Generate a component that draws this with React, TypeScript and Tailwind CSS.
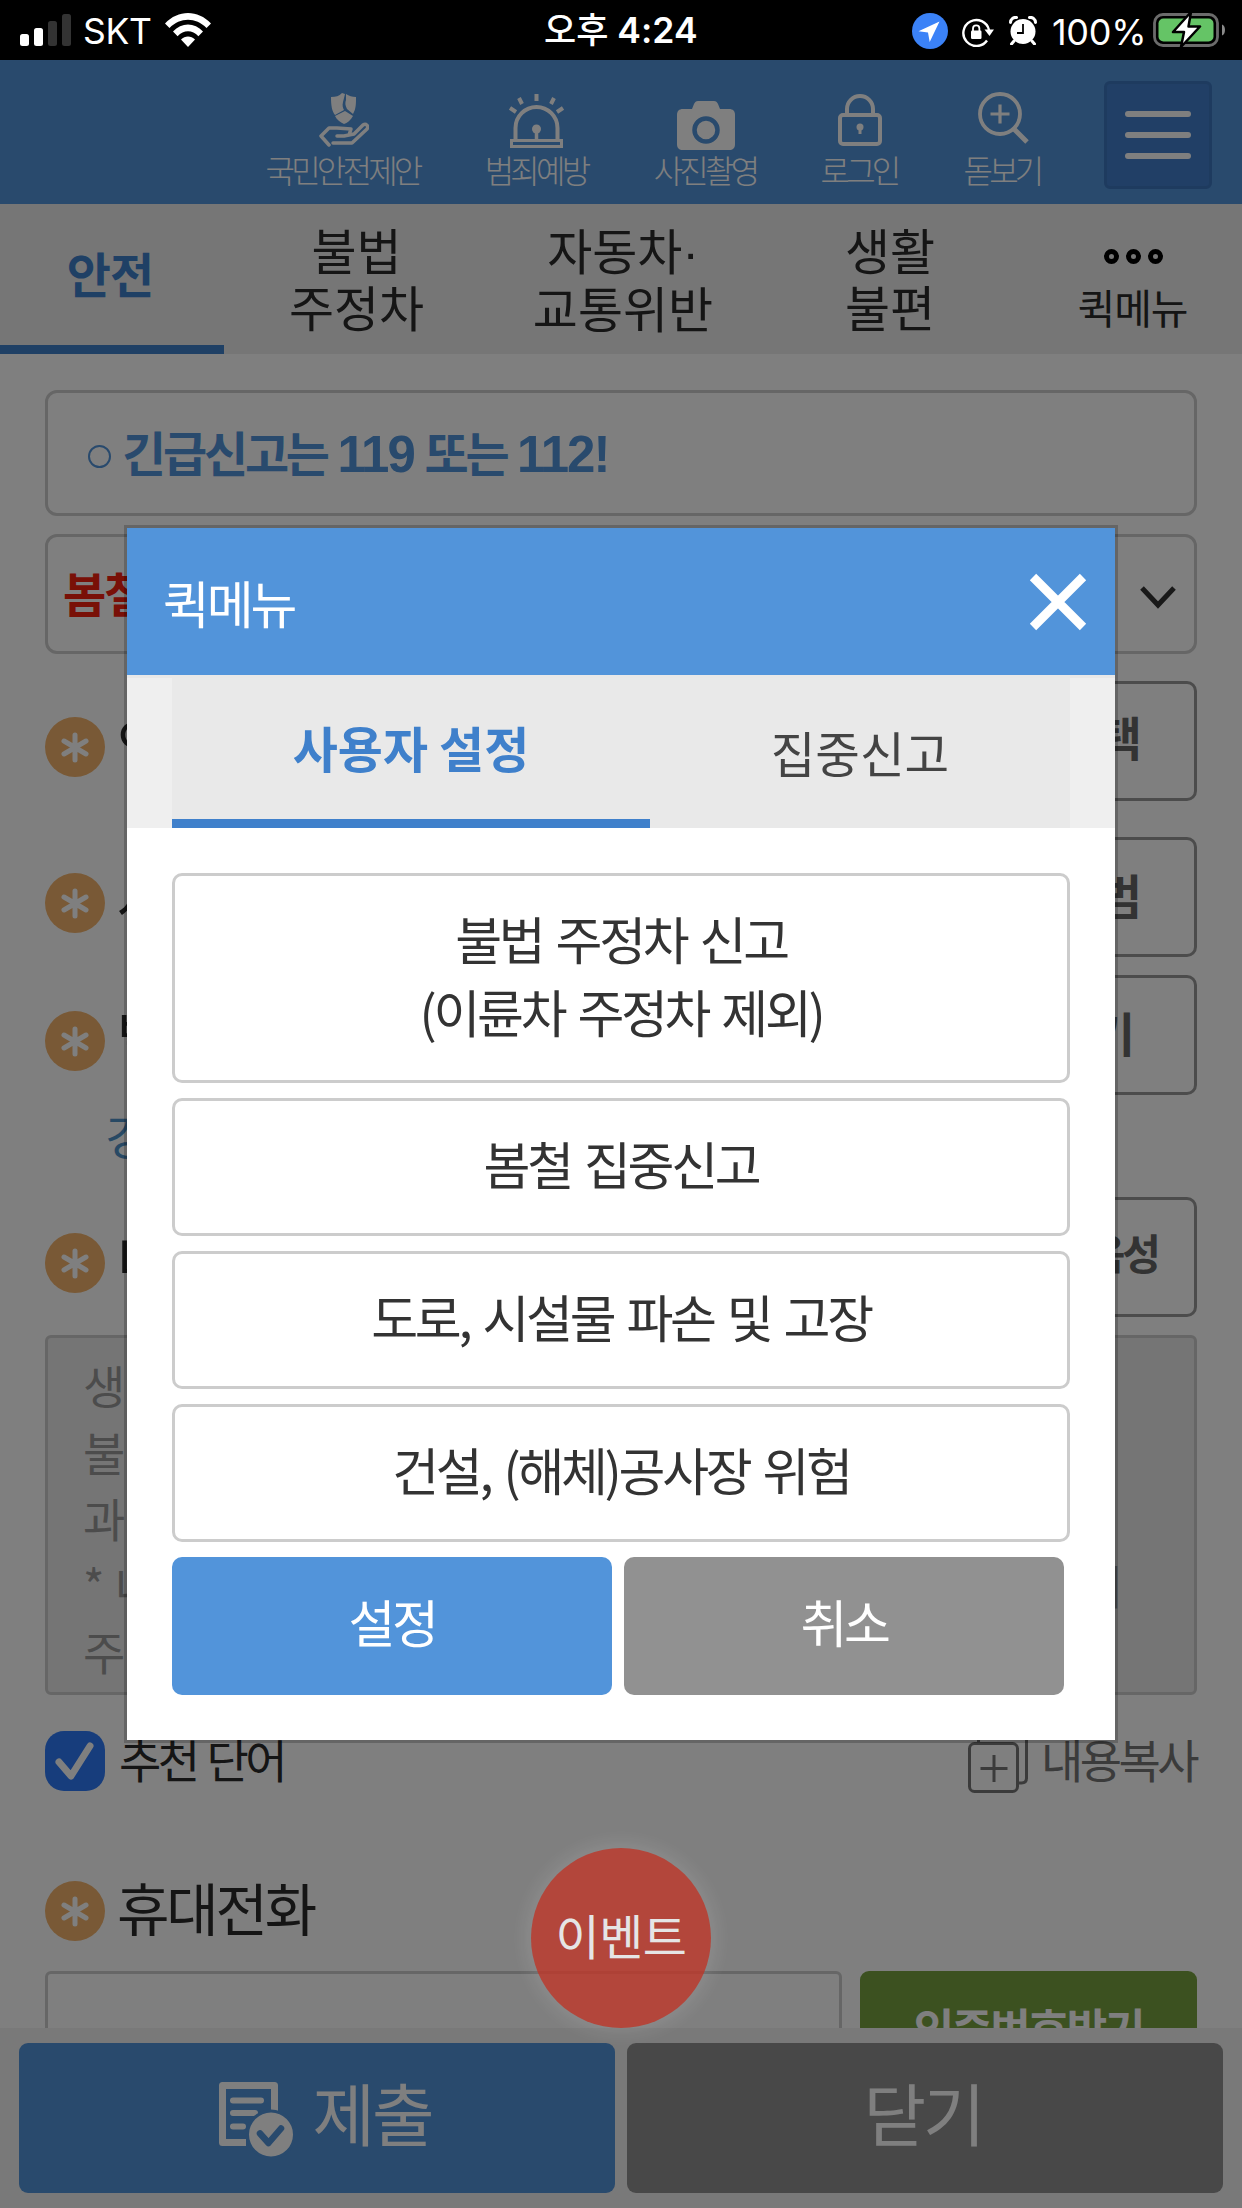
import type { ReactNode } from "react";

const QUICK_ITEMS = [
  ["불법 주정차 신고", "(이륜차 주정차 제외)"],
  ["봄철 집중신고"],
  ["도로, 시설물 파손 및 고장"],
  ["건설, (해체)공사장 위험"],
];

const PLACEHOLDER = [
  ["생활 속 안전 위험요인", ""],
  ["불편사항 등을 사진", ""],
  ["과 함께 신고해 주세요", ""],
  ["* 내용 입력 시", "기"],
  ["주소를 확인하세요", ""],
];

function StatusBar() {
  return (
    <div className="flex h-[60px] items-start bg-black text-white font-['Inter','Noto_Sans_CJK_KR',sans-serif]">
      <div className="flex w-[544px] items-start pl-5">
        <svg className="mt-3.5" width="51" height="32" viewBox="0 0 51 32">
          <rect x="0" y="20" width="9" height="12" rx="2.5" fill="#fff" />
          <rect x="14" y="14" width="9" height="18" rx="2.5" fill="#fff" />
          <rect x="28" y="7" width="9" height="25" rx="2.5" fill="#333" />
          <rect x="42" y="0" width="9" height="32" rx="2.5" fill="#333" />
        </svg>
        <span className="ml-3 mt-[11px] w-[68px] whitespace-nowrap text-[35.500px] leading-[42px] tracking-[-0.3px]">SKT</span>
        <svg className="ml-3.5 mt-[13px]" width="46" height="34" viewBox="0 0 46 34" fill="#fff">
          <path d="M0 10.5C13-3.5 33-3.5 46 10.5l-4.5 4.6C31 4 15 4 4.5 15.100z" />
          <path d="M8 18.500c8.500-9.200 21.500-9.200 30 0l-4.600 4.700c-6-6.600-14.800-6.600-20.800 0z" />
          <path d="M16 26.500c4-4 10-4 14 0L23 34z" />
        </svg>
      </div>
      <div className="mt-2.5 w-[368px] whitespace-nowrap text-[35.500px] font-semibold leading-[42px]">
        <span className="font-['Noto_Sans_CJK_KR',sans-serif] text-[35px] font-medium leading-none">오후</span> 4:24
      </div>
      <svg className="mt-[13px]" width="36" height="36" viewBox="0 0 36 36">
        <circle cx="18" cy="18" r="18" fill="#3b82f7" />
        <path d="M27.500 8.500L6.500 18.300l9.500 1.200 1.700 9.500z" fill="#fff" />
      </svg>
      <svg className="ml-3.5 mt-[17px]" width="32" height="30" viewBox="0 0 32 30">
        <path d="M25 23.500A13 13 0 1 1 27 13" fill="none" stroke="#fff" strokeWidth="2.400" />
        <path d="M22.500 12.500h9.500L27.500 19z" fill="#fff" />
        <rect x="9" y="13.500" width="10.500" height="8.500" rx="1.200" fill="#fff" />
        <path d="M11 14v-2.500a3.200 3.200 0 0 1 6.400 0V14" fill="none" stroke="#fff" strokeWidth="1.800" />
      </svg>
      <svg className="ml-[15px] mt-4" width="28" height="29" viewBox="0 0 28 29">
        <circle cx="14" cy="15.500" r="12.500" fill="#fff" />
        <path d="M1.500 6.500a5 5 0 0 1 6-5M26.500 6.500a5 5 0 0 0-6-5M5 25l-2.500 3M23 25l2.500 3" stroke="#fff" strokeWidth="3" strokeLinecap="round" fill="none" />
        <path d="M14 8v9H8" fill="none" stroke="#000" strokeWidth="1.800" />
      </svg>
      <span className="ml-[15px] mt-[11px] w-[94px] whitespace-nowrap text-[36px] leading-[42px] tracking-[-0.3px]">100%</span>
      <svg className="ml-[7px] mt-[11px]" width="75" height="38" viewBox="0 0 75 38">
        <rect x="1.500" y="3.500" width="63" height="31" rx="8.500" fill="none" stroke="#6b6b6b" strokeWidth="2.800" />
        <path d="M69 13.500c4 1.200 4 9.800 0 11z" fill="#8a8a8a" />
        <rect x="5.500" y="7.500" width="55" height="23" rx="5" fill="#65c466" />
        <path d="M38 1L20 21h11l-3 15 19-20.500H35.500z" fill="#fff" stroke="#000" strokeWidth="2.500" strokeLinejoin="round" />
      </svg>
    </div>
  );
}

function HeaderItem({ label, className, children }: { label: string; className: string; children: ReactNode }) {
  return (
    <div className={`flex shrink-0 flex-col items-center ${className}`}>
      <div className="flex h-[91px] items-end justify-center">{children}</div>
      <span className="-ml-0.5 whitespace-nowrap text-[32px] font-light leading-[36px] tracking-[-3.800px]">{label}</span>
    </div>
  );
}

function Header() {
  return (
    <header className="flex h-[144px] items-start bg-[#5294da] pl-[267px] text-white">
      <HeaderItem label="국민안전제안" className="w-[153px]">
        <svg className="mb-1" width="50" height="54" viewBox="0 0 50 54">
          <path d="M12 4c5 0 8-1 11-4l3 1-2 8c-1 4 0 6 1 8l-9 5c-3-4-4-9-4-18z" fill="#fff" />
          <path d="M27 1c3 2 6 3 10 3 0 7 0 12-3 17l-6-5c-2-4-2-6-1-9z" fill="#fff" />
          <path d="M16 23l10-5 8 5c-2 4-6 7-9 8-4-2-7-4-9-8z" fill="#fff" />
          <path d="M10 52L2 43l8-8h8l14 1-2 6-5 1h-7M30 42l5-1 9-9c3-2 6 1 4 4L33 50H14" fill="none" stroke="#fff" strokeWidth="3.500" strokeLinejoin="round" strokeLinecap="round" />
        </svg>
      </HeaderItem>
      <HeaderItem label="범죄예방" className="ml-[65px] w-[104px]">
        <svg className="mb-[3px]" width="56" height="54" viewBox="0 0 56 54" fill="none" stroke="#fff">
          <rect x="2.500" y="46.500" width="50" height="6" strokeWidth="3" />
          <path d="M6.500 46V34a21 21 0 0 1 42 0v12" strokeWidth="4" />
          <path d="M27.500 35v11" strokeWidth="3.500" />
          <ellipse cx="27.500" cy="35" rx="4.500" ry="4.500" fill="#fff" stroke="none" />
          <path d="M27.500 0v7M10 4l3 6M45 4l-3 6M1 14l6 4M54 14l-6 4" strokeWidth="4" />
        </svg>
      </HeaderItem>
      <HeaderItem label="사진촬영" className="ml-[65px] w-[104px]">
        <svg className="mb-px" width="58" height="49" viewBox="0 0 58 49">
          <path d="M6 8h9l2-5c1-2 2-3 4-3h16c2 0 3 1 4 3l2 5h9c4 0 6 2 6 6v29c0 4-2 6-6 6H6c-4 0-6-2-6-6V14c0-4 2-6 6-6z" fill="#fff" />
          <circle cx="29" cy="29" r="11.500" fill="none" stroke="#5294da" strokeWidth="4.500" />
        </svg>
      </HeaderItem>
      <HeaderItem label="로그인" className="ml-[63px] w-[78px]">
        <svg className="mb-[5px]" width="44" height="52" viewBox="0 0 44 52" fill="none" stroke="#fff" strokeWidth="4">
          <rect x="2" y="21" width="40" height="29" rx="3" />
          <path d="M9 20v-5a13 13 0 0 1 26 0v5" />
          <circle cx="22" cy="33" r="3.500" fill="#fff" stroke="none" />
          <path d="M22 33v7" strokeWidth="3" />
        </svg>
      </HeaderItem>
      <HeaderItem label="돋보기" className="ml-[65px] w-[78px]">
        <svg className="mb-[7px]" width="51" height="52" viewBox="0 0 51 52" fill="none" stroke="#fff" strokeWidth="3.800">
          <circle cx="22" cy="22" r="20" />
          <path d="M36 37l13 13" strokeWidth="5" />
          <path d="M22 12.500v19M12.500 22h19" strokeWidth="3.200" />
        </svg>
      </HeaderItem>
      <div className="ml-[62px] mt-[21px] flex h-[108px] w-[108px] flex-col items-center gap-[15px] rounded-md border-[3px] border-[#3c76bf] bg-[#427fcc] pt-[27px]">
        <i className="h-1.5 w-[66px] rounded-full bg-white" />
        <i className="h-1.5 w-[66px] rounded-full bg-white" />
        <i className="h-1.5 w-[66px] rounded-full bg-white" />
      </div>
    </header>
  );
}

function CategoryTabs() {
  return (
    <nav className="flex h-[150px] bg-[#ececec] text-center text-[49px] leading-[57px] text-[#2b2b2b]">
      <div className="w-[224px] border-b-[9px] border-[#3f80cb] pt-[40px] pr-1 text-[48px] font-bold tracking-[-1px] text-[#3f80cb]">안전</div>
      <div className="w-[265px] whitespace-nowrap pt-4">불법<br />주정차</div>
      <div className="w-[268px] whitespace-nowrap pt-4">
        자동차<span className="font-['Liberation_Sans',sans-serif] leading-none">·</span><br />교통위반
      </div>
      <div className="w-[266px] whitespace-nowrap pt-4">생활<br />불편</div>
      <div className="flex w-[219px] flex-col items-center pt-[45px]">
        <div className="ml-0.5 flex gap-[7px]">
          <i className="size-[15px] rounded-full border-[5px] border-black" />
          <i className="size-[15px] rounded-full border-[5px] border-black" />
          <i className="size-[15px] rounded-full border-[5px] border-black" />
        </div>
        <span className="mt-3.5 text-[41px] tracking-[-1.200px]">퀵메뉴</span>
      </div>
    </nav>
  );
}

function RequiredMark() {
  return (
    <svg className="shrink-0" width="60" height="60" viewBox="0 0 60 60">
      <circle cx="30" cy="30" r="30" fill="#f2b36d" />
      <path d="M30 18v25M19 24l22 13M41 24L19 37" stroke="#fff" strokeWidth="5" strokeLinecap="round" />
    </svg>
  );
}

function FieldRow({ label, action, className }: { label: string; action: string; className: string }) {
  return (
    <div className="flex h-[120px] items-center justify-between">
      <div className="flex items-center pt-3">
        <RequiredMark />
        <span className="ml-3 -mt-3 whitespace-nowrap text-[56px] leading-[60px] tracking-[-3px] text-[#2b2b2b]">{label}</span>
      </div>
      <div className={`flex h-[120px] w-[337px] items-center justify-end rounded-[10px] border-[3px] border-[#999] font-bold text-[#666] ${className}`}>
        {action}
      </div>
    </div>
  );
}

function ReportForm() {
  return (
    <main className="h-[1674px] overflow-hidden bg-white px-[45px] pt-9">
      <div className="flex h-[126px] items-center rounded-xl border-[3px] border-[#ccc] pl-10 pb-1 text-[48px] font-bold leading-[60px] tracking-[-3.200px] text-[#5294da]">
        <i className="mr-[11px] mt-[11px] size-[23px] rounded-full border-2 border-[#5294da]" />
        <span className="whitespace-nowrap [word-spacing:3px]">
          긴급신고는 <span className="font-['Liberation_Sans',sans-serif] text-[51px] leading-none tracking-[-2px]">119</span> 또는{" "}
          <span className="font-['Liberation_Sans',sans-serif] text-[51px] leading-none tracking-[-2px]">112!</span>
        </span>
      </div>
      <div className="mt-[18px] flex h-[120px] items-center justify-between rounded-xl border-[3px] border-[#ccc] pl-[15px] pr-[18px] text-[47px] font-bold tracking-[-2px] text-[#f2210f]">
        <span className="pb-1">봄철 집중신고 기간 운영</span>
        <svg className="mt-1.5" width="36" height="24" viewBox="0 0 36 24" fill="none" stroke="#333" strokeWidth="5">
          <path d="M2 3l16 17L34 3" />
        </svg>
      </div>

      <div className="mt-[27px] flex flex-col">
        <FieldRow label="안전신고 유형" action="유형선택" className="pr-[54px] pb-2.5 text-[47px] tracking-[-2px]" />
        <div className="h-9" />
        <FieldRow label="사진/동영상" action="촬영/앨범" className="pr-[54px] pb-1.5 text-[47px] tracking-[-2px]" />
        <div className="h-[18px]" />
        <FieldRow label="발생지역" action="위치찾기" className="pr-[61px] pb-1.5 text-[47px] tracking-[-2px]" />
        <div className="flex h-[102px] items-center pb-6 pl-[60px] text-[48px] text-[#5093c9]">경기도 수원시</div>
        <FieldRow label="내용" action="문자/음성" className="pr-[36px] pb-3 text-[42px] tracking-[-3px]" />
      </div>

      <div className="mt-[18px] h-[360px] rounded-md border-[3px] border-[#ccc] bg-[#ebebeb] pl-[35px] pr-[71px] pt-[13px] text-[46px] leading-[66.500px] text-[#999]">
        {PLACEHOLDER.map(([text, tail]) => (
          <p key={text} className="flex justify-between whitespace-nowrap">
            <span>{text}</span>
            <span>{tail}</span>
          </p>
        ))}
      </div>

      <div className="mt-9 flex h-[60px] items-center text-[46px] leading-[60px] tracking-[-3.500px]">
        <svg width="60" height="60" viewBox="0 0 60 60">
          <rect width="60" height="60" rx="19" fill="#2e7af8" />
          <path d="M14 31l12 14L45 15" fill="none" stroke="#fff" strokeWidth="7" strokeLinecap="round" strokeLinejoin="round" />
        </svg>
        <span className="-mt-1.5 ml-[14px] text-[#2b2b2b] [word-spacing:3px]">추천 단어</span>
        <svg className="ml-auto mt-[8px]" width="60" height="60" viewBox="0 0 60 60" fill="none" stroke="#777" strokeWidth="3">
          <rect x="1.500" y="8.500" width="48" height="48" rx="5" />
          <path d="M10.500 7V4q0-4 4-4h40q4 0 4 4v39q0 5-5 5h-4M26 20v27M12.500 33.500h27" />
        </svg>
        <span className="-mt-1.5 ml-[13px] mr-px text-[#777] tracking-[-3.600px]">내용복사</span>
      </div>

      <div className="mt-[90px] flex h-[60px] items-center">
        <RequiredMark />
        <span className="-mt-[10px] ml-3 text-[57px] leading-[60px] tracking-[-3.200px] text-[#2b2b2b]">휴대전화</span>
      </div>
      <div className="mt-[30px] flex gap-[18px]">
        <div className="h-[120px] w-[797px] rounded-md border-[3px] border-[#ccc]" />
        <div className="flex h-[120px] flex-1 justify-center rounded-[9px] bg-[#78a240] pt-[23px] text-[44px] font-bold leading-[66px] tracking-[-2.200px] text-white">
          인증번호받기
        </div>
      </div>
    </main>
  );
}

function BottomActions() {
  return (
    <footer className="flex h-[180px] gap-3 bg-[#f2f2f2] px-[19px] py-[15px] text-[68px] leading-[140px] tracking-[-3px] text-white">
      <div className="flex h-[150px] w-[596px] items-center justify-center rounded-[9px] bg-[#5294da] pl-[17px]">
        <svg className="mt-1" width="76" height="76" viewBox="0 0 76 76">
          <path d="M27 60.500H3.500V3.500h52V29" fill="none" stroke="#fff" strokeWidth="7" strokeLinejoin="round" />
          <path d="M14 18.500h28M14 31h22M14 44.500h10" stroke="#fff" strokeWidth="6" strokeLinecap="round" />
          <circle cx="52" cy="52.500" r="25" fill="#5294da" />
          <circle cx="52" cy="52.500" r="22" fill="#fff" />
          <path d="M41 51.500l8.500 9.500L62 46.500" fill="none" stroke="#5294da" strokeWidth="6.500" strokeLinecap="round" strokeLinejoin="round" />
        </svg>
        <span className="-mt-[12px] ml-[17px]">제출</span>
      </div>
      <div className="h-[150px] w-[596px] rounded-[9px] bg-[#909090] pr-1 text-center leading-[137px]">닫기</div>
    </footer>
  );
}

function QuickMenuDialog() {
  return (
    <section className="absolute left-[124px] top-[525px] w-[994px] border-[3px] border-black/20 bg-white bg-clip-padding text-center">
      <div className="flex h-[147px] items-center justify-between bg-[#5294da] pl-[36px] pr-[28px] text-white">
        <h2 className="pt-0.5 text-[51px] tracking-[-3.200px]">퀵메뉴</h2>
        <svg width="58" height="58" viewBox="0 0 58 58" stroke="#fff" strokeWidth="9">
          <path d="M4 4l50 50M54 4L4 54" />
        </svg>
      </div>
      <div className="border-t-[3px] border-[#e8e8e8] bg-[#efefef] px-[45px]">
        <div className="flex h-[150px] bg-[#e9e9e9] leading-[60px]">
          <div className="w-[478px] border-b-[9px] border-[#3f80cb] pt-[39px] text-[49px] font-bold text-[#3f80cb]">사용자 설정</div>
          <div className="flex-1 pt-11 text-[48.500px] text-[#444]">집중신고</div>
        </div>
      </div>
      <div className="flex flex-col gap-[15px] p-[45px] text-[51px] leading-[73px] tracking-[-3.300px] text-[#333] [word-spacing:5px]">
        {QUICK_ITEMS.map((lines) => (
          <div key={lines[0]} className="rounded-[10px] border-[3px] border-[#ccc] pb-[33px] pt-[26px] first:pb-8">
            {lines.map((line) => (
              <p key={line}>{line}</p>
            ))}
          </div>
        ))}
        <div className="flex gap-3 text-white">
          <div className="h-[138px] w-[440px] rounded-[10px] bg-[#5294da] pt-7">설정</div>
          <div className="h-[138px] w-[440px] rounded-[10px] bg-[#919191] pt-7">취소</div>
        </div>
      </div>
    </section>
  );
}

export default function App() {
  return (
    <div className="relative h-[2208px] w-[1242px] overflow-hidden bg-white font-['Noto_Sans_CJK_KR',sans-serif]">
      <StatusBar />
      <Header />
      <CategoryTabs />
      <ReportForm />
      <BottomActions />

      <div className="absolute inset-x-0 bottom-0 top-[60px] bg-black/50" />
      <QuickMenuDialog />
      <div className="absolute left-[531px] top-[1848px] flex size-[180px] items-center justify-center rounded-full bg-[#c0392b] pb-2 text-[48px] tracking-[-0.5px] text-white opacity-80 shadow-[0_0_24px_rgba(255,255,255,0.22)]">
        이벤트
      </div>
    </div>
  );
}
